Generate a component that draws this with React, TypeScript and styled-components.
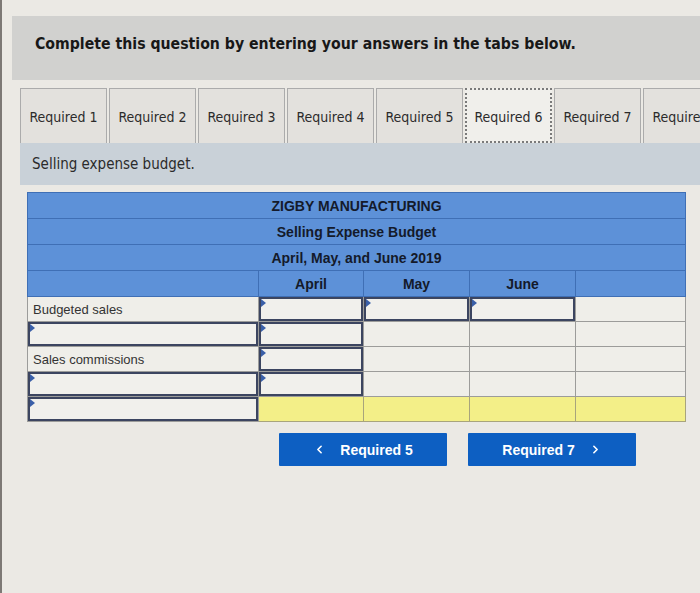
import { ChevronLeft, ChevronRight } from 'lucide-react'
import styled, { createGlobalStyle, css } from 'styled-components'

const GlobalStyle = createGlobalStyle`
	html, body {
		margin: 0;
		padding: 0;
	}
	body {
		background: #ebe9e4;
		border-left: 2px solid #7d7975;
		min-height: 593px;
		box-sizing: border-box;
		font-family: 'DejaVu Sans Condensed', 'DejaVu Sans', sans-serif;
		color: #2a2a2a;
	}
`

const Page = styled.div`
	padding-top: 16px;
	overflow: hidden;
`

const Banner = styled.div`
	margin-left: 10px;
	height: 64px;
	box-sizing: border-box;
	background: #d1d1cf;
	padding: 0 0 10px 23px;
	display: flex;
	align-items: center;
	font-weight: bold;
	font-size: 15.7px;
	color: #181818;
`

const TabBar = styled.div`
	display: flex;
	gap: 2px;
	margin-top: 8px;
	padding-left: 18px;
	height: 55px;
	white-space: nowrap;
`

const Tab = styled.div<{ $active?: boolean }>`
	flex: 0 0 87px;
	box-sizing: border-box;
	display: flex;
	align-items: center;
	justify-content: center;
	padding-top: 2px;
	font-size: 14px;
	color: #2b2b2b;
	background: #e3e1dd;
	border: 1px solid #ababab;
	border-bottom: none;

	${p =>
		p.$active &&
		css`
			background: #f0efeb;
			border: 2px dotted #7a7a7a;
		`}
`

const Prompt = styled.div`
	margin-left: 18px;
	height: 42px;
	background: #c9d1d8;
	padding-left: 12px;
	display: flex;
	align-items: center;
	font-size: 15px;
	color: #2b2b2b;
`

const Budget = styled.table`
	margin: 7px 0 0 25px;
	border-collapse: collapse;
	table-layout: fixed;
	width: 658px;
	font-family: 'Liberation Sans', Arial, sans-serif;
`

const HeadCell = styled.th`
	height: 25px;
	padding: 0;
	background: #5d91d8;
	border: 1px solid #3f6fb5;
	font-size: 14px;
	font-weight: bold;
	color: #141a2a;
	text-align: center;
`

const Cell = styled.td<{ $total?: boolean }>`
	height: 24px;
	padding: 0;
	background: ${p => (p.$total ? '#f3ef88' : '#efeee9')};
	border: 1px solid ${p => (p.$total ? '#a8a47c' : '#9c9c9a')};
	font-size: 13px;
	color: #333;
`

const Label = styled.div`
	padding-left: 5px;
`

const Entry = styled.div`
	position: relative;
	height: 24px;
	box-sizing: border-box;
	border: 2px solid #3c4560;
	background: #f1f0ec;

	&::before {
		content: '';
		position: absolute;
		top: 0;
		left: 0;
		border-top: 4px solid transparent;
		border-bottom: 4px solid transparent;
		border-left: 5px solid #3a5fa8;
	}
`

const NavRow = styled.div`
	display: flex;
	gap: 21px;
	margin: 11px 0 0 277px;
`

const NavButton = styled.button`
	width: 168px;
	height: 33px;
	display: flex;
	align-items: center;
	justify-content: center;
	gap: 14px;
	background: #0d5fc2;
	border: none;
	border-radius: 1px;
	color: #fff;
	font-family: 'Liberation Sans', Arial, sans-serif;
	font-size: 14px;
	font-weight: bold;
	padding: 0;
`

const tabs = Array.from({ length: 8 }, (_, i) => `Required ${i + 1}`)

type Row = {
	label?: string
	labelInput?: boolean
	inputs: number
	total?: boolean
}

const rows: Row[] = [
	{ label: 'Budgeted sales', inputs: 3 },
	{ labelInput: true, inputs: 1 },
	{ label: 'Sales commissions', inputs: 1 },
	{ labelInput: true, inputs: 1 },
	{ labelInput: true, inputs: 0, total: true },
]

const App = () => {
	return (
		<Page>
			<GlobalStyle />
			<Banner>Complete this question by entering your answers in the tabs below.</Banner>
			<TabBar>
				{tabs.map((t, i) => (
					<Tab key={t} $active={i === 5}>
						{t}
					</Tab>
				))}
			</TabBar>
			<Prompt>Selling expense budget.</Prompt>
			<Budget>
				<colgroup>
					<col style={{ width: 231 }} />
					<col style={{ width: 105 }} />
					<col style={{ width: 106 }} />
					<col style={{ width: 106 }} />
					<col style={{ width: 110 }} />
				</colgroup>
				<thead>
					<tr>
						<HeadCell colSpan={5}>ZIGBY MANUFACTURING</HeadCell>
					</tr>
					<tr>
						<HeadCell colSpan={5}>Selling Expense Budget</HeadCell>
					</tr>
					<tr>
						<HeadCell colSpan={5}>April, May, and June 2019</HeadCell>
					</tr>
					<tr>
						<HeadCell />
						<HeadCell>April</HeadCell>
						<HeadCell>May</HeadCell>
						<HeadCell>June</HeadCell>
						<HeadCell />
					</tr>
				</thead>
				<tbody>
					{rows.map((r, ri) => (
						<tr key={ri}>
							<Cell>{r.labelInput ? <Entry /> : <Label>{r.label}</Label>}</Cell>
							{[0, 1, 2, 3].map(ci => (
								<Cell key={ci} $total={r.total}>
									{ci < r.inputs && <Entry />}
								</Cell>
							))}
						</tr>
					))}
				</tbody>
			</Budget>
			<NavRow>
				<NavButton>
					<ChevronLeft size={13} strokeWidth={3} />
					Required 5
				</NavButton>
				<NavButton>
					Required 7
					<ChevronRight size={13} strokeWidth={3} />
				</NavButton>
			</NavRow>
		</Page>
	)
}

export default App
